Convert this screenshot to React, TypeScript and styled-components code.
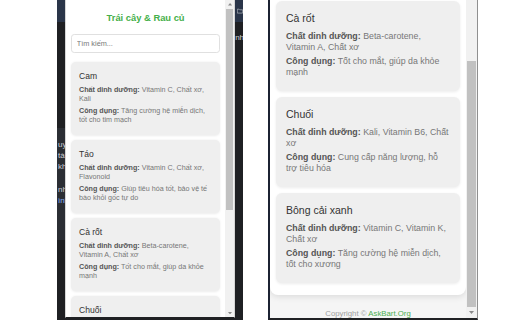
import React from 'react';
import styled, { createGlobalStyle } from 'styled-components';

const Global = createGlobalStyle`
  html, body { margin: 0; padding: 0; background: #fff; }
  body { width: 512px; height: 320px; overflow: hidden; font-family: "Liberation Sans", Arial, sans-serif; }
  * { box-sizing: border-box; }
`;

type Item = { name: string; nut: string; use: string };
const items: Item[] = [
  { name: 'Cam', nut: 'Vitamin C, Chất xơ, Kali', use: 'Tăng cường hệ miễn dịch, tốt cho tim mạch' },
  { name: 'Táo', nut: 'Vitamin C, Chất xơ, Flavonoid', use: 'Giúp tiêu hóa tốt, bảo vệ tế bào khỏi gốc tự do' },
  { name: 'Cà rốt', nut: 'Beta-carotene, Vitamin A, Chất xơ', use: 'Tốt cho mắt, giúp da khỏe mạnh' },
  { name: 'Chuối', nut: 'Kali, Vitamin B6, Chất xơ', use: 'Cung cấp năng lượng, hỗ trợ tiêu hóa' },
  { name: 'Bông cải xanh', nut: 'Vitamin C, Vitamin K, Chất xơ', use: 'Tăng cường hệ miễn dịch, tốt cho xương' },
];

const Page = styled.div`
  display: flex;
  align-items: flex-start;
  width: 512px;
  height: 320px;
  background: #fff;
`;

/* ---------- left screenshot: popup over a dark browser window ---------- */
const LeftShot = styled.div`
  display: flex;
  margin-left: 57px;
  width: 186px;
  height: 320px;
  background: #1f2023;
  overflow: hidden;
`;

const Strip = styled.div<{ $w: number }>`
  display: flex;
  flex-direction: column;
  width: ${p => p.$w}px;
  flex-shrink: 0;
  overflow: hidden;
  font-size: 8px;
  line-height: 11px;
  color: #cfd1d4;
  white-space: nowrap;
`;

const NavyBar = styled.div`
  display: flex;
  align-items: center;
  height: 22px;
  flex-shrink: 0;
  background: #2a3549;
  padding-left: 2px;
`;

const StripSpace = styled.div<{ $h: number }>`
  height: ${p => p.$h}px;
  flex-shrink: 0;
`;

const StripPanel = styled.div`
  display: flex;
  flex-direction: column;
  height: 112px;
  padding-top: 11px;
  background: #2b2e34;
  padding-left: 1px;
`;

const StripWord = styled.span<{ $link?: boolean }>`
  display: block;
  color: ${p => (p.$link ? '#8ab4f8' : '#cfd1d4')};
`;

/* ---------- right screenshot: cropped popup scrolled to the end ---------- */
const RightShot = styled.div`
  display: flex;
  flex-direction: column;
  justify-content: flex-end;
  margin-left: 25px;
  width: 210px;
  height: 320px;
  overflow: hidden;
`;

/* ---------- popup ---------- */
const PopupFrame = styled.div<{ $zoom: number; $edge: string; $edgeW: number }>`
  zoom: ${p => p.$zoom};
  display: flex;
  flex-shrink: 0;
  width: ${p => 208 + p.$edgeW}px;
  height: 391px;
  background: #f5f5f5;
  border-left: ${p => p.$edgeW}px solid ${p => p.$edge};
  border-right: 1px solid ${p => (p.$edgeW > 1 ? '#8f8f8f' : p.$edge)};
  border-bottom: 2px solid #202124;
`;

const Viewport = styled.div<{ $atEnd: boolean }>`
  flex: 1;
  display: flex;
  flex-direction: column;
  justify-content: ${p => (p.$atEnd ? 'flex-end' : 'flex-start')};
  overflow: hidden;
`;

const Container = styled.div`
  flex-shrink: 0;
  background: #fff;
  border-radius: 0 0 8px 8px;
  box-shadow: 0 2px 6px rgba(0, 0, 0, 0.1);
  padding: 16px 6px 12px;
`;

const Heading = styled.h1`
  margin: 0 0 12px;
  font-size: 11.5px;
  line-height: 14px;
  font-weight: 700;
  color: #45b04a;
  text-align: center;
`;

const Search = styled.input`
  display: block;
  width: 100%;
  height: 23px;
  margin: 0 0 11px;
  padding: 0 6px;
  border: 1px solid #e0e0e0;
  border-radius: 4px;
  font-family: inherit;
  font-size: 9px;
  color: #333;
  background: #fff;
  outline: none;
  &::placeholder { color: #777; }
`;

const CardList = styled.div`
  display: flex;
  flex-direction: column;
  gap: 6px;
`;

const Card = styled.div`
  background: #efefef;
  border-radius: 6px;
  padding: 10px;
  box-shadow: 0 1px 3px rgba(0, 0, 0, 0.08);
`;

const CardTitle = styled.h3`
  margin: 0 0 5px;
  font-size: 10.5px;
  line-height: 15px;
  font-weight: 400;
  color: #333;
`;

const Info = styled.p`
  margin: 0 0 3px;
  font-size: 8.8px;
  line-height: 11px;
  color: #777;
`;

const Label = styled.strong`
  color: #555;
  font-weight: 700;
`;

const Footer = styled.div`
  flex-shrink: 0;
  height: 23px;
  padding-top: 13px;
  font-size: 7.8px;
  line-height: 12px;
  color: #a0a0a0;
  text-align: center;
`;

const Brand = styled.span`
  color: #4caf50;
`;

const Scrollbar = styled.div`
  display: flex;
  flex-direction: column;
  width: 11px;
  flex-shrink: 0;
  background: #f1f1f1;
`;

const ArrowBtn = styled.div`
  display: flex;
  align-items: center;
  justify-content: center;
  height: 11px;
  flex-shrink: 0;
`;

const Track = styled.div<{ $atEnd: boolean }>`
  flex: 1;
  display: flex;
  flex-direction: column;
  justify-content: ${p => (p.$atEnd ? 'flex-end' : 'flex-start')};
`;

const Thumb = styled.div`
  height: 67%;
  margin: 0 1px;
  background: #c1c1c1;
`;

const Arrow = ({ down }: { down?: boolean }) => (
  <svg width="5" height="3" viewBox="0 0 5 3">
    <path d={down ? 'M0 0 L5 0 L2.5 3 Z' : 'M0 3 L5 3 L2.5 0 Z'} fill="#8a8a8a" />
  </svg>
);

const Popup = ({ zoom, atEnd, edge, edgeW }: { zoom: number; atEnd: boolean; edge: string; edgeW: number }) => (
  <PopupFrame $zoom={zoom} $edge={edge} $edgeW={edgeW}>
    <Viewport $atEnd={atEnd}>
      <Container>
        <Heading>Trái cây &amp; Rau củ</Heading>
        <Search placeholder="Tìm kiếm..." />
        <CardList>
          {items.map(it => (
            <Card key={it.name}>
              <CardTitle>{it.name}</CardTitle>
              <Info>
                <Label>Chất dinh dưỡng:</Label> {it.nut}
              </Info>
              <Info>
                <Label>Công dụng:</Label> {it.use}
              </Info>
            </Card>
          ))}
        </CardList>
      </Container>
      <Footer>
        Copyright © <Brand>AskBart.Org</Brand>
      </Footer>
    </Viewport>
    <Scrollbar>
      <ArrowBtn>
        <Arrow />
      </ArrowBtn>
      <Track $atEnd={atEnd}>
        <Thumb />
      </Track>
      <ArrowBtn>
        <Arrow down />
      </ArrowBtn>
    </Scrollbar>
  </PopupFrame>
);

const Folder = () => (
  <svg width="10" height="8" viewBox="0 0 10 8">
    <path d="M0.5 1 H3.5 L4.5 2 H9.5 V7.5 H0.5 Z" fill="none" stroke="#c9ccd1" strokeWidth="1" />
  </svg>
);

export default function App() {
  return (
    <>
      <Global />
      <Page>
        <LeftShot>
          <Strip $w={8}>
            <NavyBar />
            <StripSpace $h={106} />
            <StripPanel>
              <StripWord>uy</StripWord>
              <StripWord>tài</StripWord>
              <StripWord>khó</StripWord>
              <StripSpace $h={12} />
              <StripWord>nhậ</StripWord>
              <StripWord $link>ình</StripWord>
            </StripPanel>
          </Strip>
          <Popup zoom={0.814} atEnd={false} edge="#d6d6d6" edgeW={1} />
          <Strip $w={8}>
            <NavyBar>
              <Folder />
            </NavyBar>
            <StripSpace $h={10} />
            <StripWord>nhà</StripWord>
          </Strip>
        </LeftShot>
        <RightShot>
          <Popup zoom={1} atEnd edge="#1c2333" edgeW={2} />
        </RightShot>
      </Page>
    </>
  );
}
